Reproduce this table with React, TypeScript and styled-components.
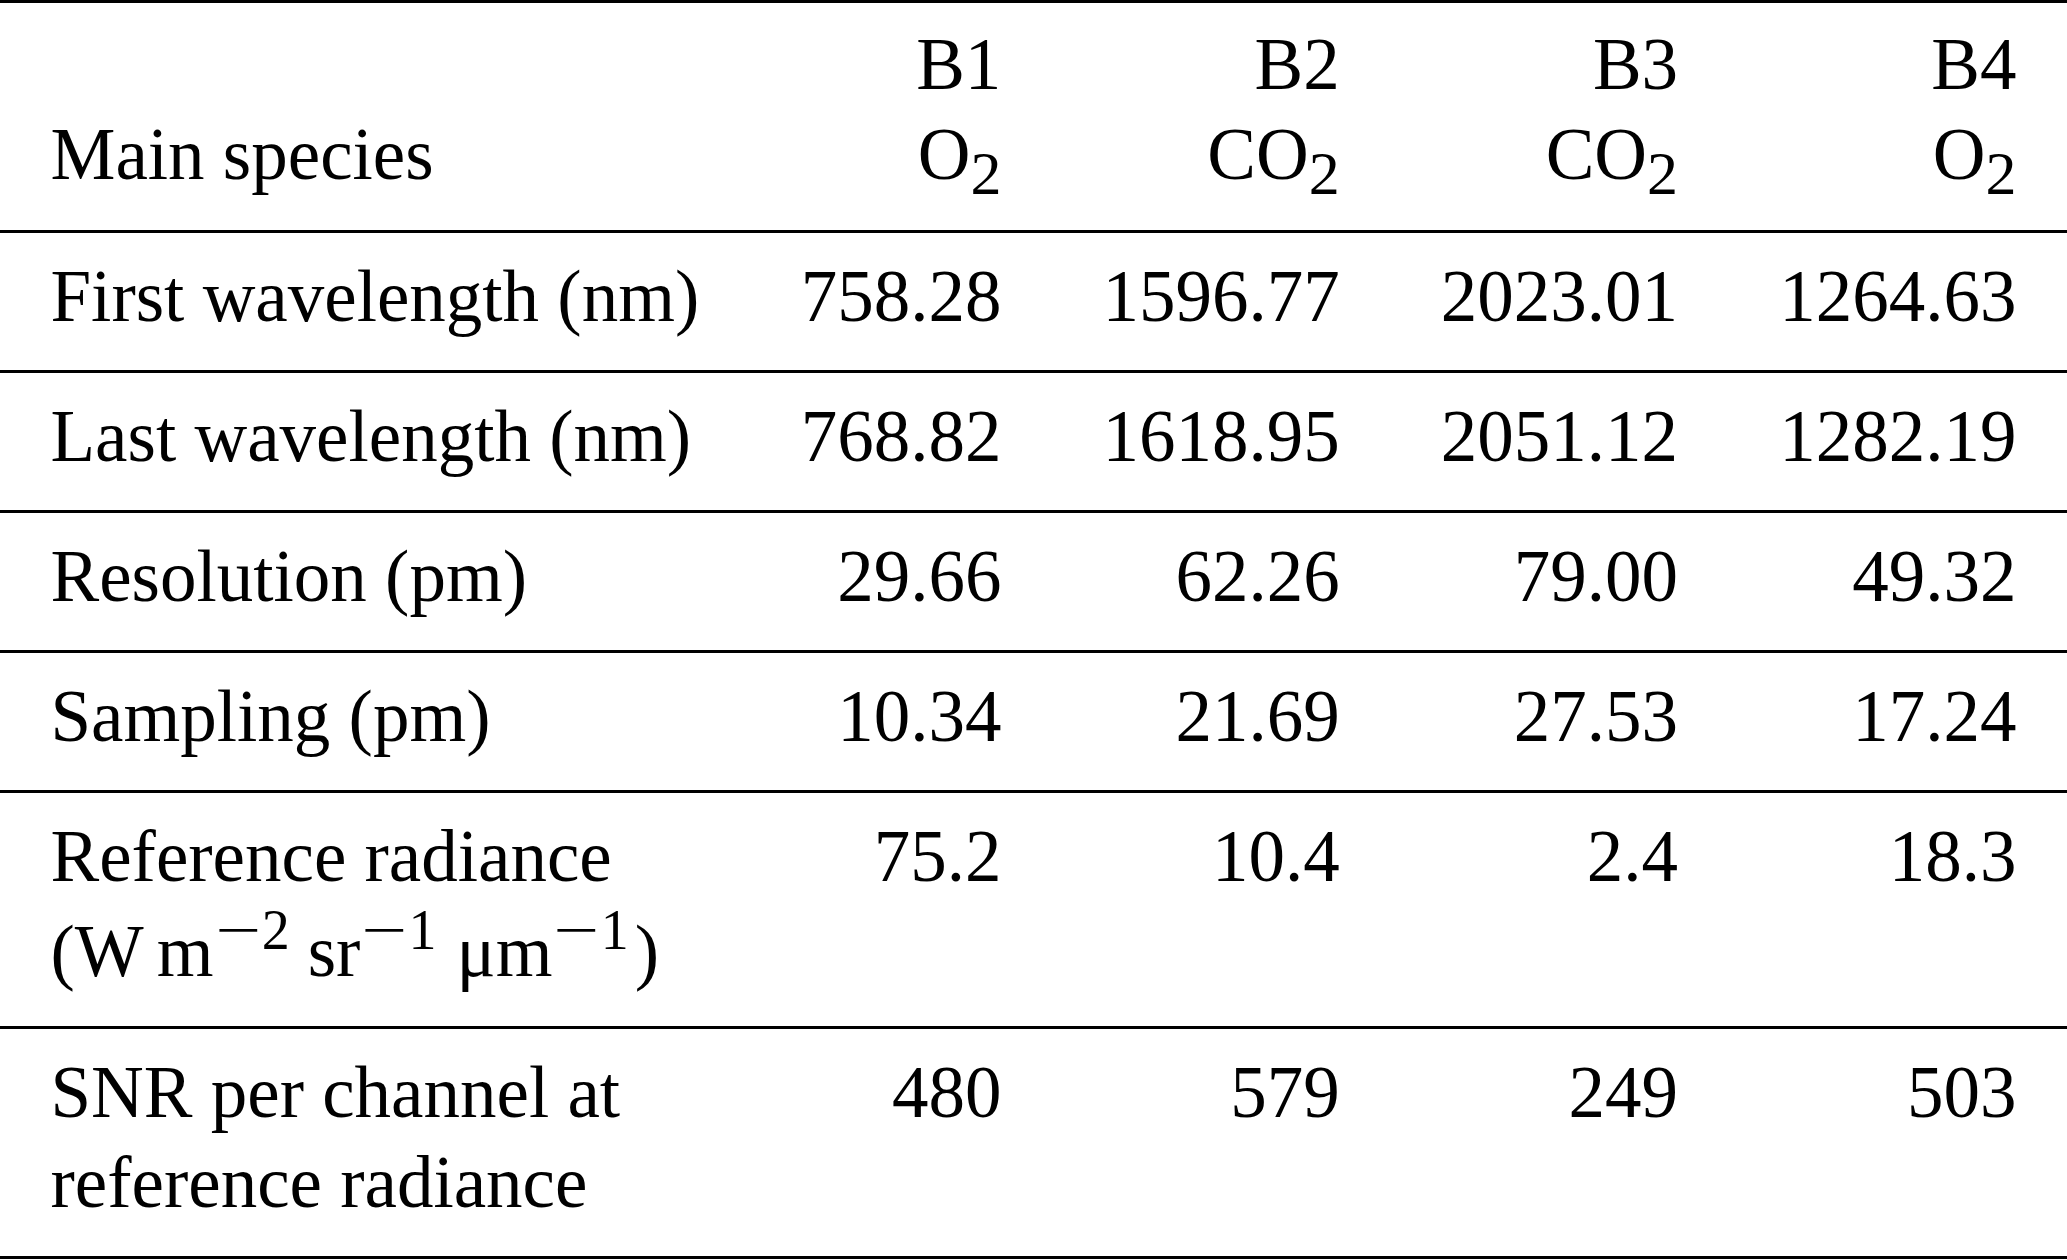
import styled, { createGlobalStyle } from 'styled-components';
import { ReactNode } from 'react';

const GlobalStyle = createGlobalStyle`
  html, body {
    margin: 0;
    padding: 0;
    background: #fff;
  }
  body {
    font-family: 'Liberation Serif', 'Times New Roman', serif;
    color: #000;
  }
`;

const Wrapper = styled.div`
  width: 2067px;
  border-top: 3px solid #000;
`;

const Table = styled.table`
  width: 2067px;
  border-collapse: collapse;
  border-spacing: 0;
  font-size: 73px;
  line-height: 90px;
`;

const HeadCell = styled.th<{ $left?: boolean }>`
  padding: 17px 50.5px 30px;
  font-weight: normal;
  text-align: ${(p) => (p.$left ? 'left' : 'right')};
  vertical-align: ${(p) => (p.$left ? 'bottom' : 'top')};
  white-space: nowrap;
  border-bottom: 3px solid #000;
`;

const Cell = styled.td<{ $left?: boolean; $tight?: boolean }>`
  padding: 19px 50.5px ${(p) => (p.$tight ? 24 : 28)}px;
  text-align: ${(p) => (p.$left ? 'left' : 'right')};
  vertical-align: top;
  white-space: nowrap;
  border-bottom: 3px solid #000;
`;

const Line = styled.span<{ $tall?: boolean }>`
  display: block;
  line-height: ${(p) => (p.$tall ? 100 : 90)}px;
`;

const Sub = styled.sub`
  font-size: 62px;
  line-height: 0;
  vertical-align: -15px;
`;

const Sup = styled.sup`
  font-size: 56px;
  line-height: 0;
  vertical-align: 27px;
`;

const Minus = styled.span`
  display: inline-block;
  width: 0.86em;
  text-align: center;
  transform: scaleX(1.45);
`;

const Gap = styled.span<{ $w?: number }>`
  display: inline-block;
  width: ${(p) => p.$w ?? 18}px;
`;

type Row = {
  label: ReactNode;
  values: string[];
  tight?: boolean;
};

const bands = [
  { name: 'B1', species: 'O' },
  { name: 'B2', species: 'CO' },
  { name: 'B3', species: 'CO' },
  { name: 'B4', species: 'O' },
];

const rows: Row[] = [
  { label: 'First wavelength (nm)', values: ['758.28', '1596.77', '2023.01', '1264.63'] },
  { label: 'Last wavelength (nm)', values: ['768.82', '1618.95', '2051.12', '1282.19'] },
  { label: 'Resolution (pm)', values: ['29.66', '62.26', '79.00', '49.32'] },
  { label: 'Sampling (pm)', values: ['10.34', '21.69', '27.53', '17.24'] },
  {
    label: (
      <>
        <Line>Reference radiance</Line>
        <Line $tall>
          (W<Gap $w={13} />m<Sup><Minus>−</Minus>2</Sup><Gap />sr<Sup><Minus>−</Minus>1</Sup>
          <Gap $w={20} />μm<Sup><Minus>−</Minus>1</Sup><Gap $w={6} />)
        </Line>
      </>
    ),
    values: ['75.2', '10.4', '2.4', '18.3'],
    tight: true,
  },
  {
    label: (
      <>
        <Line>SNR per channel at</Line>
        <Line>reference radiance</Line>
      </>
    ),
    values: ['480', '579', '249', '503'],
  },
];

export default function App() {
  return (
    <>
      <GlobalStyle />
      <Wrapper>
        <Table>
          <thead>
            <tr>
              <HeadCell $left>Main species</HeadCell>
              {bands.map((b) => (
                <HeadCell key={b.name}>
                  <Line>{b.name}</Line>
                  <Line>
                    {b.species}
                    <Sub>2</Sub>
                  </Line>
                </HeadCell>
              ))}
            </tr>
          </thead>
          <tbody>
            {rows.map((r, i) => (
              <tr key={i}>
                <Cell $left $tight={r.tight}>
                  {r.label}
                </Cell>
                {r.values.map((v, j) => (
                  <Cell key={j}>{v}</Cell>
                ))}
              </tr>
            ))}
          </tbody>
        </Table>
      </Wrapper>
    </>
  );
}
